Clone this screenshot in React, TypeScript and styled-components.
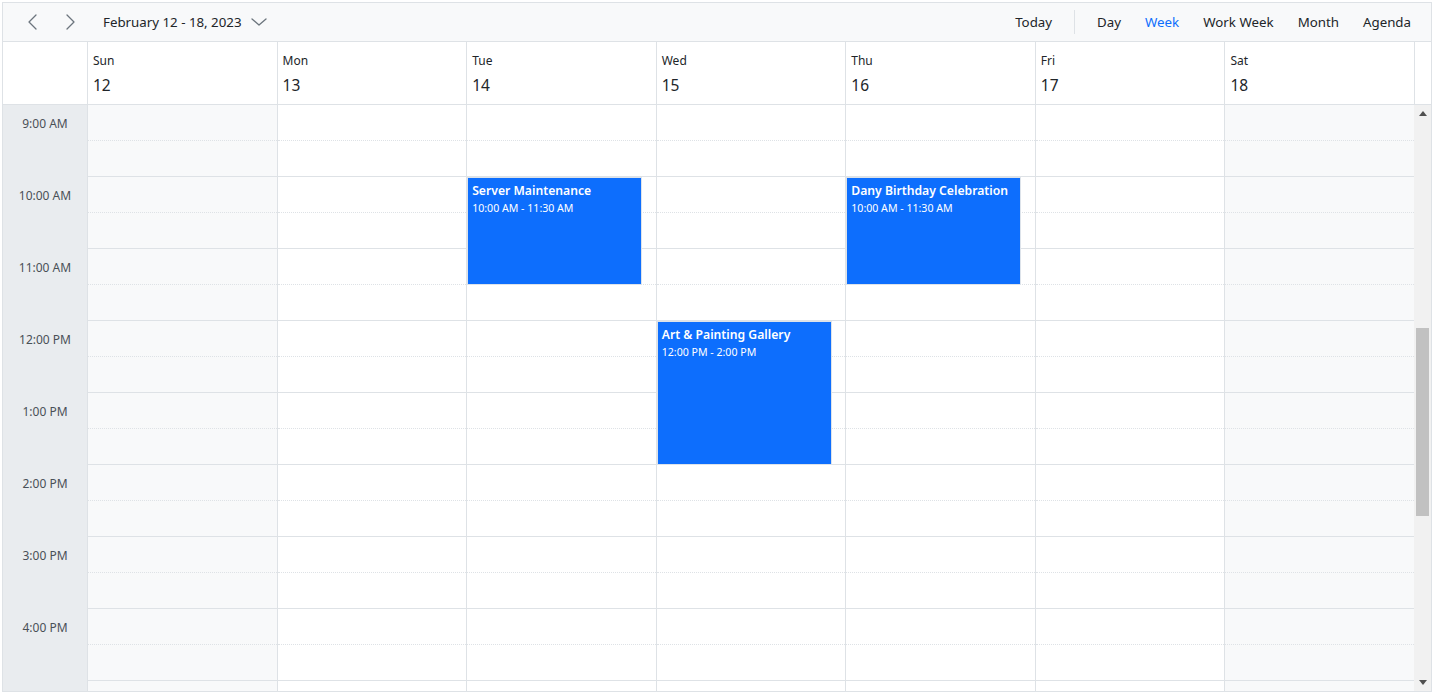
import React from 'react'
import styled, { createGlobalStyle } from 'styled-components'

let GlobalStyle = createGlobalStyle`
	body {
		margin: 0;
		font-family: "Noto Sans", "Open Sans", sans-serif;
		color: #212529;
		background: #fff;
	}
`

type CalEvent = {
	day: number;
	title: string;
	time: string;
	start: number;
	hours: number;
}

let days = [
	{ name: 'Sun', date: 12, weekend: true },
	{ name: 'Mon', date: 13, weekend: false },
	{ name: 'Tue', date: 14, weekend: false },
	{ name: 'Wed', date: 15, weekend: false },
	{ name: 'Thu', date: 16, weekend: false },
	{ name: 'Fri', date: 17, weekend: false },
	{ name: 'Sat', date: 18, weekend: true },
]

// the last row is only partly visible, its label falls below the fold
let hours = ['9:00 AM', '10:00 AM', '11:00 AM', '12:00 PM', '1:00 PM', '2:00 PM', '3:00 PM', '4:00 PM', '']

let events: CalEvent[] = [
	{ day: 2, title: 'Server Maintenance', time: '10:00 AM - 11:30 AM', start: 10, hours: 1.5 },
	{ day: 4, title: 'Dany Birthday Celebration', time: '10:00 AM - 11:30 AM', start: 10, hours: 1.5 },
	{ day: 3, title: 'Art & Painting Gallery', time: '12:00 PM - 2:00 PM', start: 12, hours: 2 },
]

let views = ['Day', 'Week', 'Work Week', 'Month', 'Agenda']

let SLOT = 36

let Chevron = ({ dir }: { dir: 'left' | 'right' | 'down' }) => {
	let d = dir === 'left' ? 'M8 1 L1 8 L8 15' : dir === 'right' ? 'M1 1 L8 8 L1 15' : 'M1 1 L8 7 L15 1'
	let w = dir === 'down' ? 16 : 9
	let h = dir === 'down' ? 8 : 16
	return (
		<svg width={w} height={h} viewBox={`0 0 ${w} ${h}`} fill='none'>
			<path d={d} stroke='#6c757d' strokeWidth='1.3' strokeLinecap='round' strokeLinejoin='round' />
		</svg>
	)
}

let Triangle = ({ up }: { up: boolean }) => (
	<svg width='8' height='5' viewBox='0 0 8 5'>
		<path d={up ? 'M0 5 L4 0 L8 5 Z' : 'M0 0 L8 0 L4 5 Z'} fill='#505050' />
	</svg>
)

export default function App() {
	return (
		<>
			<GlobalStyle />
			<Scheduler>
				<Toolbar>
					<NavButton><Chevron dir='left' /></NavButton>
					<NavButton><Chevron dir='right' /></NavButton>
					<DateRange>
						February 12 - 18, 2023
						<Chevron dir='down' />
					</DateRange>
					<Spacer />
					<ViewButton>Today</ViewButton>
					<Separator />
					{views.map(v => (
						<ViewButton key={v} active={v === 'Week'}>{v}</ViewButton>
					))}
				</Toolbar>

				<HeaderRow>
					<Corner />
					{days.map(d => (
						<DayHeader key={d.name}>
							<DayName>{d.name}</DayName>
							<DayDate>{d.date}</DayDate>
						</DayHeader>
					))}
					<Gutter />
				</HeaderRow>

				<Body>
					<TimeColumn>
						{hours.map((h, i) => (
							<TimeCell key={i}>
								<TimeLabel>{h}</TimeLabel>
							</TimeCell>
						))}
					</TimeColumn>

					<DaysGrid>
						{days.map((d, i) => (
							<DayColumn key={d.name} weekend={d.weekend}>
								{hours.map((h, j) => (
									<React.Fragment key={j}>
										<HalfSlot />
										<HourSlot />
									</React.Fragment>
								))}
								{events.filter(e => e.day === i).map(e => (
									<EventCard
										key={e.title}
										style={{ top: (e.start - 9) * SLOT * 2, height: e.hours * SLOT * 2 }}
									>
										<EventTitle>{e.title}</EventTitle>
										<EventTime>{e.time}</EventTime>
									</EventCard>
								))}
							</DayColumn>
						))}
					</DaysGrid>

					<ScrollTrack>
						<ScrollArrow><Triangle up /></ScrollArrow>
						<ThumbArea>
							<Thumb />
						</ThumbArea>
						<ScrollArrow><Triangle up={false} /></ScrollArrow>
					</ScrollTrack>
				</Body>
			</Scheduler>
		</>
	)
}

let Scheduler = styled.div`
	margin: 2px;
	width: 1430px;
	height: 690px;
	box-sizing: border-box;
	border: 1px solid #dee2e6;
	display: flex;
	flex-direction: column;
	overflow: hidden;
`

let Toolbar = styled.div`
	height: 39px;
	box-sizing: border-box;
	flex-shrink: 0;
	display: flex;
	align-items: center;
	padding: 0 8px 0 13px;
	background: #f8f9fa;
	border-bottom: 1px solid #dee2e6;
	font-size: 13.3px;
`

let NavButton = styled.button`
	width: 32px;
	height: 30px;
	margin-right: 6px;
	border: none;
	background: transparent;
	display: flex;
	align-items: center;
	justify-content: center;
	padding: 0;
	cursor: pointer;
`

let DateRange = styled.div`
	margin-left: 11px;
	display: flex;
	align-items: center;
	gap: 9px;
	color: #212529;
`

let Spacer = styled.div`
	flex: 1;
`

let ViewButton = styled.button<{ active?: boolean }>`
	border: none;
	background: transparent;
	font: inherit;
	padding: 4px 12px;
	color: ${p => p.active ? '#0d6efd' : '#212529'};
	cursor: pointer;
`

let Separator = styled.div`
	width: 1px;
	height: 24px;
	background: #dee2e6;
	margin: 0 10px;
`

let HeaderRow = styled.div`
	display: grid;
	grid-template-columns: 84px repeat(7, 1fr) 17px;
	height: 63px;
	flex-shrink: 0;
	box-sizing: border-box;
	border-bottom: 1px solid #dee2e6;
`

let Corner = styled.div``

let DayHeader = styled.div`
	border-left: 1px solid #dee2e6;
	padding: 11px 5px 0;
	display: flex;
	flex-direction: column;
`

let DayName = styled.div`
	font-size: 12px;
	color: #212529;
	line-height: 16px;
`

let DayDate = styled.div`
	font-size: 15.5px;
	line-height: 22px;
	margin-top: 5px;
	color: #212529;
`

let Gutter = styled.div`
	border-left: 1px solid #dee2e6;
`

let Body = styled.div`
	flex: 1;
	display: flex;
	min-height: 0;
	overflow: hidden;
`

let TimeColumn = styled.div`
	width: 84px;
	flex-shrink: 0;
	background: #e9ecef;
`

let TimeCell = styled.div`
	height: ${SLOT * 2}px;
`

let TimeLabel = styled.div`
	height: ${SLOT}px;
	display: flex;
	align-items: center;
	justify-content: center;
	font-size: 12px;
	color: #495057;
`

let DaysGrid = styled.div`
	flex: 1;
	display: grid;
	grid-template-columns: repeat(7, 1fr);
	align-items: start;
`

let DayColumn = styled.div<{ weekend: boolean }>`
	position: relative;
	border-left: 1px solid #dee2e6;
	background: ${p => p.weekend ? '#f8f9fa' : '#fff'};
`

let HalfSlot = styled.div`
	height: ${SLOT}px;
	box-sizing: border-box;
	border-bottom: 1px dotted #dee2e6;
`

let HourSlot = styled.div`
	height: ${SLOT}px;
	box-sizing: border-box;
	border-bottom: 1px solid #dee2e6;
`

let EventCard = styled.div`
	position: absolute;
	left: 0;
	width: 175px;
	box-sizing: border-box;
	background: #0d6efd;
	border: 1px solid #dde3ea;
	color: #fff;
	padding: 4px 4px;
	overflow: hidden;
`

let EventTitle = styled.div`
	font-size: 12.2px;
	font-weight: 600;
	line-height: 18px;
	white-space: nowrap;
`

let EventTime = styled.div`
	font-size: 10.6px;
	line-height: 16px;
	white-space: nowrap;
`

let ScrollTrack = styled.div`
	width: 17px;
	flex-shrink: 0;
	background: #f1f1f1;
	display: flex;
	flex-direction: column;
`

let ScrollArrow = styled.div`
	height: 17px;
	display: flex;
	align-items: center;
	justify-content: center;
`

let ThumbArea = styled.div`
	flex: 1;
	padding-top: 206px;
`

let Thumb = styled.div`
	width: 13px;
	margin-left: 2px;
	height: 188px;
	background: #c1c1c1;
`
